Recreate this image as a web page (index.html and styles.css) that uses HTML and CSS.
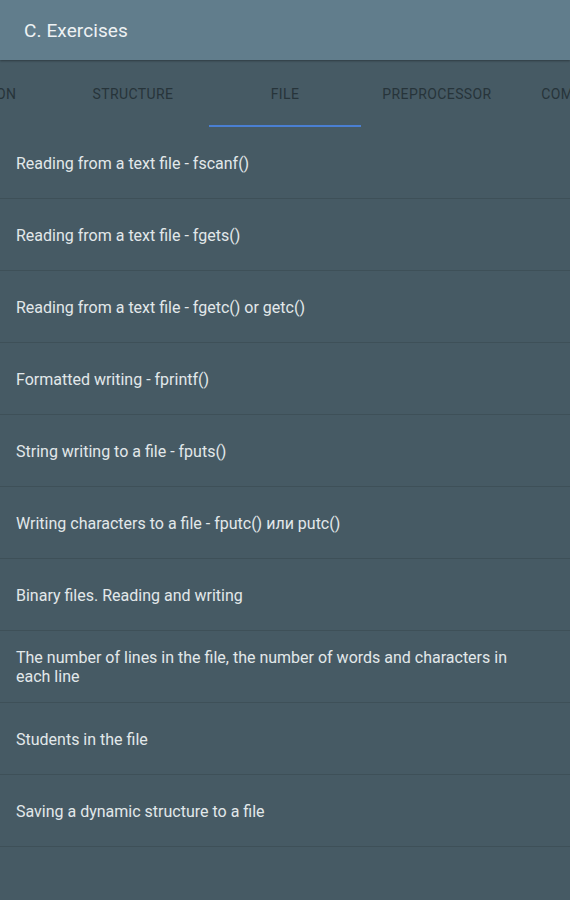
FILE: index.html
```html
<!DOCTYPE html>
<html>
<head>
<meta charset="utf-8">
<link rel="stylesheet" href="styles.css">
</head>
<body>
<header class="appbar"><span class="title">C. Exercises</span></header>
<nav class="tabs">
  <div class="tab-strip">
    <div class="tab">FUNCTION</div>
    <div class="tab">STRUCTURE</div>
    <div class="tab active">FILE</div>
    <div class="tab">PREPROCESSOR</div>
    <div class="tab">COMPILATION</div>
  </div>
</nav>
<ul class="list">
  <li class="item">Reading from a text file - fscanf()</li>
  <li class="item">Reading from a text file - fgets()</li>
  <li class="item">Reading from a text file - fgetc() or getc()</li>
  <li class="item">Formatted writing - fprintf()</li>
  <li class="item">String writing to a file - fputs()</li>
  <li class="item">Writing characters to a file - fputc() или putc()</li>
  <li class="item">Binary files. Reading and writing</li>
  <li class="item">The number of lines in the file, the number of words and characters in each line</li>
  <li class="item">Students in the file</li>
  <li class="item">Saving a dynamic structure to a file</li>
</ul>
</body>
</html>
```
FILE: styles.css
```css
* { box-sizing: border-box; }
html, body { margin: 0; padding: 0; }
body {
  width: 570px;
  height: 900px;
  overflow: hidden;
  background: #465a64;
  font-family: Roboto, "Liberation Sans", sans-serif;
}
.appbar {
  height: 60px;
  background: #617d8c;
  display: flex;
  align-items: center;
  padding-left: 24px;
  box-shadow: 0 1px 2px rgba(0,0,0,0.35);
  position: relative;
  z-index: 1;
}
.title {
  color: #eef2f4;
  font-size: 19px;
  letter-spacing: 0.1px;
}
.tabs {
  height: 67px;
  overflow: hidden;
  background: #465a64;
}
.tab-strip {
  display: flex;
  margin-left: -95px;
  height: 100%;
}
.tab {
  flex: 0 0 152px;
  display: flex;
  align-items: center;
  justify-content: center;
  font-size: 14px;
  color: #27343a;
  letter-spacing: 0.4px;
  padding-top: 2px;
  border-bottom: 2px solid transparent;
  white-space: nowrap;
}
.tab.active {
  border-bottom-color: #4a7fd2;
}
.list {
  list-style: none;
  margin: 0;
  padding: 0;
}
.item {
  height: 72px;
  display: flex;
  align-items: center;
  padding: 1px 48px 0 16px;
  border-bottom: 1px solid #3e5058;
  color: #e2e8ea;
  font-size: 16px;
  line-height: 19px;
  letter-spacing: 0;
}
```
